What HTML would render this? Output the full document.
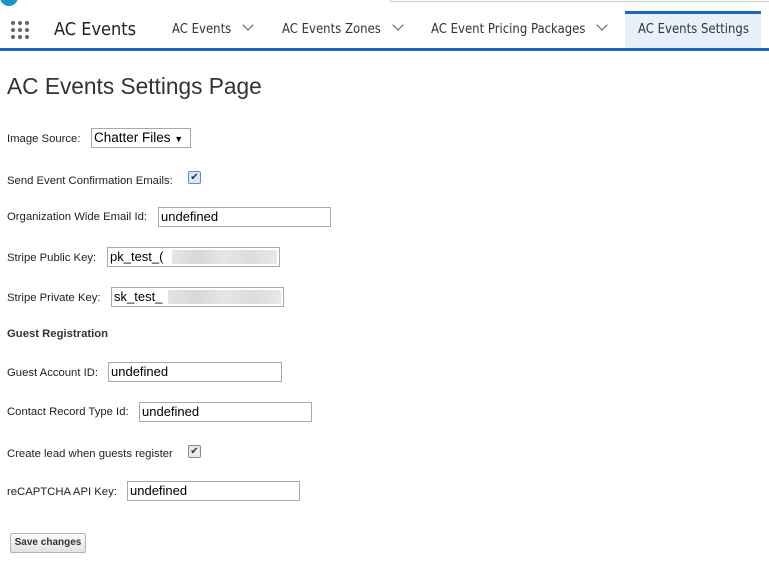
<!DOCTYPE html>
<html><head><meta charset="utf-8"><style>
*{margin:0;padding:0;box-sizing:border-box}
body{width:769px;height:578px;background:#fff;font-family:"Liberation Sans",sans-serif;position:relative;overflow:hidden;color:#222}
.a{position:absolute;white-space:nowrap}
.lbl{font-size:11.3px;color:#222}
.inp{position:absolute;height:20px;border:1px solid #a9a9a9;background:#fff;font-size:13px;padding:1px 2px;color:#000;line-height:16px;overflow:hidden}
.blur{position:absolute;top:2px;bottom:2px;background:linear-gradient(90deg,#e4e4e4,#d8d8d8,#e6e6e6,#dcdcdc,#e8e8e8)}
.cb{position:absolute;width:13px;height:13px;border:1px solid #8a8a8a;border-radius:2px;background:#e9e9e9;font-size:10px;line-height:11px;text-align:center;color:#333}
.nav{font-size:13px;color:#333;font-family:"DejaVu Sans Condensed","Liberation Sans Narrow","Liberation Sans",sans-serif}
.chev{display:inline-block;width:8px;height:8px;border-right:1.5px solid #555;border-bottom:1.5px solid #555;transform:rotate(45deg);margin-left:13px;position:relative;top:-4px}
</style></head><body>
<div class="a" style="left:0px;top:-12px;width:18px;height:18px;border-radius:50%;background:#1798c1"></div>
<div class="a" style="left:390px;top:0;width:379px;height:2px;border-bottom:1px solid #ccc;border-left:1px solid #ccc"></div>
<div class="a" style="left:0;top:48px;width:769px;height:3px;background:#1a68b8"></div>
<div class="a" style="left:625px;top:11px;width:136px;height:37px;background:#e8f1fb;border-top:3px solid #1a68b8"></div>
<svg class="a" style="left:10px;top:20px" width="22" height="20">
<g fill="#666"><circle cx="3" cy="3" r="2"/><circle cx="10" cy="3" r="2"/><circle cx="17" cy="3" r="2"/><circle cx="3" cy="10" r="2"/><circle cx="10" cy="10" r="2"/><circle cx="17" cy="10" r="2"/><circle cx="3" cy="17" r="2"/><circle cx="10" cy="17" r="2"/><circle cx="17" cy="17" r="2"/></g></svg>
<div class="a nav" style="left:54px;top:19px;font-size:18px;color:#222">AC Events</div>
<div class="a nav" style="left:172px;top:22px">AC Events<span class="chev"></span></div>
<div class="a nav" style="left:282px;top:22px">AC Events Zones<span class="chev"></span></div>
<div class="a nav" style="left:431px;top:22px">AC Event Pricing Packages<span class="chev"></span></div>
<div class="a nav" style="left:638px;top:22px">AC Events Settings</div>

<div class="a" style="left:7px;top:73px;font-size:22.7px;color:#333">AC Events Settings Page</div>

<div class="a lbl" style="left:7px;top:133px">Image Source:</div>
<div class="inp" style="left:91px;top:128px;width:100px;height:20px;font-size:13.5px">Chatter Files <span style="font-size:9px">▼</span></div>

<div class="a lbl" style="left:7px;top:175px">Send Event Confirmation Emails:</div>
<div class="cb" style="left:188px;top:171px;border-color:#5b8fd0;background:#dde7f3">✔</div>

<div class="a lbl" style="left:7px;top:211px">Organization Wide Email Id:</div>
<div class="inp" style="left:158px;top:207px;width:173px">undefined</div>

<div class="a lbl" style="left:7px;top:252px">Stripe Public Key:</div>
<div class="inp" style="left:107px;top:247px;width:173px">pk_test_(<div class="blur" style="left:64px;right:2px"></div></div>

<div class="a lbl" style="left:7px;top:292px">Stripe Private Key:</div>
<div class="inp" style="left:111px;top:287px;width:173px">sk_test_<div class="blur" style="left:56px;right:2px"></div></div>

<div class="a lbl" style="left:7px;top:328px;font-weight:bold;color:#333">Guest Registration</div>

<div class="a lbl" style="left:7px;top:367px">Guest Account ID:</div>
<div class="inp" style="left:108px;top:362px;width:174px">undefined</div>

<div class="a lbl" style="left:7px;top:406px">Contact Record Type Id:</div>
<div class="inp" style="left:139px;top:402px;width:173px">undefined</div>

<div class="a lbl" style="left:7px;top:448px">Create lead when guests register</div>
<div class="cb" style="left:188px;top:445px">✔</div>

<div class="a lbl" style="left:7px;top:486px">reCAPTCHA API Key:</div>
<div class="inp" style="left:127px;top:481px;width:173px">undefined</div>

<div class="a" style="left:10px;top:533px;width:76px;height:20px;border:1px solid #b5b5b5;border-radius:2px;background:linear-gradient(#fbfbfb,#e3e3e3);font-size:10px;font-weight:bold;color:#333;text-align:center;line-height:18px">Save changes</div>
</body></html>
